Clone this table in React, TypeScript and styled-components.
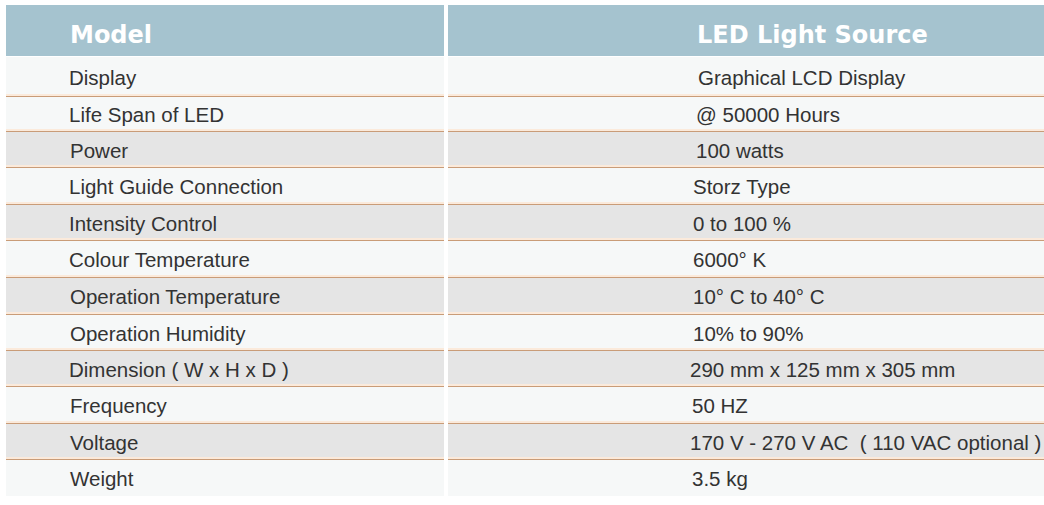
import styled, { createGlobalStyle } from "styled-components";

const GlobalStyle = createGlobalStyle`
  body {
    margin: 0;
    background: #ffffff;
    font-family: "Liberation Sans", Arial, sans-serif;
  }
`;

const Page = styled.div`
  padding: 5px 0 0 6px;
`;

const Table = styled.div`
  display: grid;
  grid-template-columns: 438px 1fr;
  column-gap: 4px;
`;

const HeadCell = styled.div<{ $indent: number }>`
  height: 51px;
  margin-bottom: 1px;
  background: #a5c3cf;
  color: #ffffff;
  font-family: "DejaVu Sans", Verdana, sans-serif;
  font-weight: bold;
  font-size: 24px;
  display: flex;
  align-items: center;
  padding-left: ${(p) => p.$indent}px;
  padding-top: 9px;
  box-sizing: border-box;
`;

const Cell = styled.div<{ $shade: boolean; $indent: number; $h: number; $last: boolean }>`
  height: ${(p) => p.$h}px;
  box-sizing: border-box;
  background: ${(p) => (p.$shade ? "#e5e5e5" : "#f6f8f8")};
  border-bottom: ${(p) => (p.$last ? "none" : "1px solid #c99c78")};
  box-shadow: ${(p) => (p.$last ? "none" : "inset 0 -3px 0 -1px #fbeadb")};
  color: #333333;
  font-size: 20.5px;
  display: flex;
  align-items: center;
  padding-left: ${(p) => p.$indent}px;
  padding-top: 2px;
`;

const Value = styled.span`
  white-space: pre;
`;

type Row = { label: string; value: string; shade: boolean; vx: number; lx: number };

const rows: Row[] = [
  { label: "Display", value: "Graphical LCD Display", shade: false, vx: 250, lx: 63 },
  { label: "Life Span of LED", value: "@ 50000 Hours", shade: false, vx: 248, lx: 63 },
  { label: "Power", value: "100 watts", shade: true, vx: 248, lx: 64 },
  { label: "Light Guide Connection", value: "Storz Type", shade: false, vx: 245, lx: 63 },
  { label: "Intensity Control", value: "0 to 100 %", shade: true, vx: 245, lx: 63 },
  { label: "Colour Temperature", value: "6000° K", shade: false, vx: 245, lx: 63 },
  { label: "Operation Temperature", value: "10° C to 40° C", shade: true, vx: 245, lx: 64 },
  { label: "Operation Humidity", value: "10% to 90%", shade: false, vx: 245, lx: 64 },
  { label: "Dimension ( W x H x D )", value: "290 mm x 125 mm x 305 mm", shade: true, vx: 242, lx: 63 },
  { label: "Frequency", value: "50 HZ", shade: false, vx: 244, lx: 64 },
  { label: "Voltage", value: "170 V - 270 V AC  ( 110 VAC optional )", shade: true, vx: 242, lx: 64 },
  { label: "Weight", value: "3.5 kg", shade: false, vx: 244, lx: 64 },
];

const heights = [40, 35, 36, 37, 36, 37, 37, 36, 36, 37, 36, 36];

export default function App() {
  return (
    <Page>
      <GlobalStyle />
      <Table>
        <HeadCell $indent={64}>Model</HeadCell>
        <HeadCell $indent={249}>LED Light Source</HeadCell>
        {rows.map((r, i) => {
          const last = i === rows.length - 1;
          return [
            <Cell key={`l${i}`} $shade={r.shade} $indent={r.lx} $h={heights[i]} $last={last}>
              {r.label}
            </Cell>,
            <Cell key={`v${i}`} $shade={r.shade} $indent={r.vx} $h={heights[i]} $last={last}>
              <Value>{r.value}</Value>
            </Cell>,
          ];
        })}
      </Table>
    </Page>
  );
}
